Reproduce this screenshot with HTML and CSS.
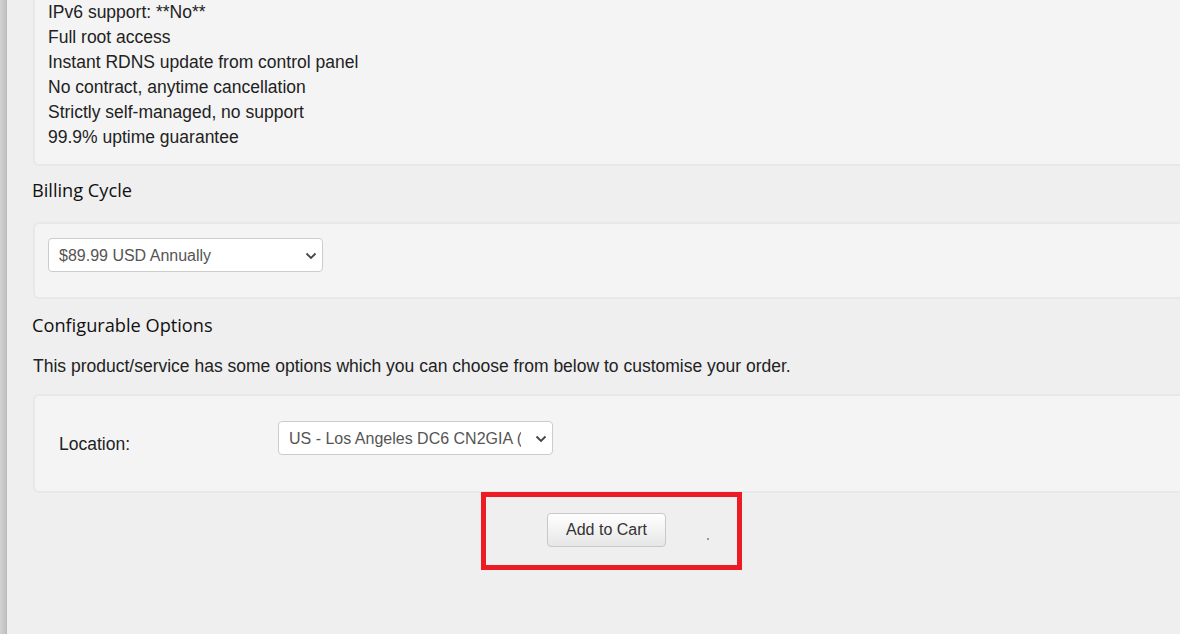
FILE: index.html
```html
<!DOCTYPE html>
<html>
<head>
<meta charset="utf-8">
<link rel="stylesheet" href="styles.css">
</head>
<body>
<div class="page">
  <div class="edge"></div>
  <main class="content">
    <section class="card card-desc">
      <div class="line">IPv6 support: **No**</div>
      <div class="line">Full root access</div>
      <div class="line">Instant RDNS update from control panel</div>
      <div class="line">No contract, anytime cancellation</div>
      <div class="line">Strictly self-managed, no support</div>
      <div class="line">99.9% uptime guarantee</div>
    </section>

    <h3 class="heading heading-billing">Billing Cycle</h3>
    <section class="card card-billing">
      <div class="select-wrap select-billing">
        <select class="select"><option>$89.99 USD Annually</option></select>
        <svg class="chev" width="12" height="8" viewBox="0 0 12 8"><path d="M1.5 1.5 L6 6 L10.5 1.5" fill="none" stroke="#444" stroke-width="1.8"/></svg>
      </div>
    </section>

    <h3 class="heading heading-config">Configurable Options</h3>
    <p class="intro">This product/service has some options which you can choose from below to customise your order.</p>
    <section class="card card-config">
      <div class="form-row">
        <label class="label">Location:</label>
        <div class="select-wrap select-loc">
          <select class="select"><option>US - Los Angeles DC6 CN2GIA (Premium)</option></select>
          <svg class="chev" width="12" height="8" viewBox="0 0 12 8"><path d="M1.5 1.5 L6 6 L10.5 1.5" fill="none" stroke="#444" stroke-width="1.8"/></svg>
        </div>
      </div>
    </section>

    <div class="actions">
      <button class="btn">Add to Cart</button>
      <div class="highlight"></div>
      <span class="dot"></span>
    </div>
  </main>
</div>
</body>
</html>
```

FILE: styles.css
```css
html, body {
  margin: 0;
  padding: 0;
  height: 100%;
  background: #efefef;
  overflow: hidden;
}

body {
  font-family: "Liberation Sans", Arial, sans-serif;
  font-size: 17.5px;
  color: #222;
}

.page {
  display: flex;
  min-height: 634px;
}

.edge {
  width: 7px;
  flex: none;
  background: linear-gradient(to right, #d2d2d2, #c4c4c4 70%, #b9b9b9);
}

.content {
  flex: 1;
  padding-left: 26px;
  min-width: 0;
}

.card {
  background: #f4f4f4;
  border: 2px solid #e8e8e8;
  border-radius: 6px;
  margin-right: -12px;
}

.card-desc {
  margin-top: -19px;
  padding: 17px 15px 14px 13px;
}

.line {
  line-height: 25px;
}

.heading {
  font-family: "Open Sans", "Noto Sans", sans-serif;
  font-weight: 400;
  font-size: 18.2px;
  line-height: 28px;
  color: #111;
  margin: 0 0 0 -1px;
}

.heading-billing {
  margin-top: 10px;
  margin-bottom: 18px;
}

.card-billing {
  padding: 14px 15px 25px 13px;
}

.select-wrap {
  position: relative;
  display: inline-block;
}

.select {
  appearance: none;
  -webkit-appearance: none;
  background: #fff;
  border: 1px solid #ccc;
  border-radius: 4px;
  font-family: "Liberation Sans", Arial, sans-serif;
  font-size: 16px;
  color: #555;
  padding: 0 31px 0 10px;
  margin: 0;
  display: block;
  outline: none;
}

.select-billing .select {
  width: 275px;
  height: 34px;
}

.select-loc .select {
  width: 275px;
  height: 34px;
}

.chev {
  position: absolute;
  right: 6px;
  top: 14px;
  pointer-events: none;
}

.heading-config {
  margin-top: 12px;
}

.intro {
  margin: 15px 0 0;
  line-height: 25px;
}

.card-config {
  margin-top: 15px;
  padding: 25px 15px 36px 24px;
}

.form-row {
  display: flex;
  align-items: flex-start;
}

.label {
  width: 219px;
  flex: none;
  padding-top: 12px;
  line-height: 22px;
}

.actions {
  position: relative;
  display: flex;
  justify-content: center;
  margin-top: 20px;
}

.btn {
  font-family: "Liberation Sans", Arial, sans-serif;
  font-size: 16px;
  color: #333;
  height: 34px;
  padding: 0 18px;
  border: 1px solid #c8c8c8;
  border-radius: 4px;
  background: linear-gradient(to bottom, #ffffff, #e6e6e6);
}

.highlight {
  position: absolute;
  left: 448px;
  top: -21px;
  width: 251px;
  height: 68px;
  border: 5px solid #ed1c24;
  pointer-events: none;
}

.dot {
  position: absolute;
  left: 674px;
  top: 25px;
  width: 2px;
  height: 2px;
  background: #9a9a9a;
}
```
